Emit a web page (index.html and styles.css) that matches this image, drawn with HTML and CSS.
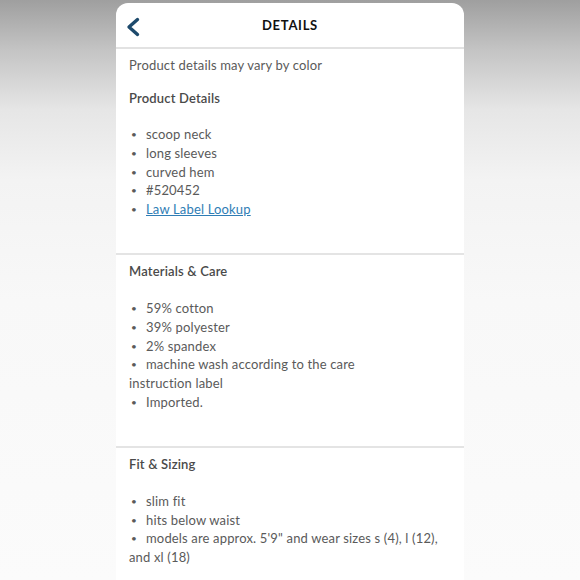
FILE: index.html
```html
<!DOCTYPE html>
<html>
<head>
<meta charset="utf-8">
<link rel="stylesheet" href="styles.css">
</head>
<body>
<div class="stage">
  <div class="card">
    <header class="topbar">
      <div class="back">
        <svg width="16" height="20" viewBox="0 0 16 20"><path d="M12.5 2.5 L4 10 L12.5 17.5" fill="none" stroke="#1d4a6c" stroke-width="3.4" stroke-linecap="round" stroke-linejoin="round"/></svg>
      </div>
      <h1 class="title">DETAILS</h1>
      <div></div>
    </header>
    <section class="sec">
      <p class="note">Product details may vary by color</p>
      <h2 class="head head-first">Product Details</h2>
      <ul class="list list-first">
        <li><span class="dot">•</span>scoop neck</li>
        <li><span class="dot">•</span>long sleeves</li>
        <li><span class="dot">•</span>curved hem</li>
        <li><span class="dot">•</span>#520452</li>
        <li><span class="dot">•</span><a class="link" href="#">Law Label Lookup</a></li>
      </ul>
    </section>
    <section class="sec sec-div">
      <h2 class="head">Materials &amp; Care</h2>
      <ul class="list">
        <li><span class="dot">•</span>59% cotton</li>
        <li><span class="dot">•</span>39% polyester</li>
        <li><span class="dot">•</span>2% spandex</li>
        <li><span class="dot">•</span>machine wash according to the care<br>instruction label</li>
        <li><span class="dot">•</span>Imported.</li>
      </ul>
    </section>
    <section class="sec sec-div">
      <h2 class="head">Fit &amp; Sizing</h2>
      <ul class="list">
        <li><span class="dot">•</span>slim fit</li>
        <li><span class="dot">•</span>hits below waist</li>
        <li><span class="dot">•</span>models are approx. 5'9" and wear sizes s (4), l (12),<br>and xl (18)</li>
      </ul>
    </section>
  </div>
</div>
</body>
</html>
```
FILE: styles.css
```css
html, body {
  margin: 0;
  padding: 0;
}
body {
  width: 580px;
  height: 580px;
  overflow: hidden;
  background: linear-gradient(to bottom, #9f9f9f 0px, #c4c4c4 50px, #e6e6e6 110px, #f3f3f3 180px, #f8f8f8 300px, #fbfbfb 580px);
  font-family: Lato, "Liberation Sans", sans-serif;
}
.stage {
  display: flex;
  justify-content: center;
  padding-top: 3px;
}
.card {
  width: 348px;
  height: 577px;
  background: #ffffff;
  border-radius: 12px 12px 0 0;
  overflow: hidden;
}
.topbar {
  height: 44px;
  display: grid;
  grid-template-columns: 1fr auto 1fr;
  align-items: center;
  border-bottom: 2px solid #e2e2e2;
}
.back {
  padding-left: 9px;
  padding-top: 3px;
  display: flex;
  align-items: center;
}
.title {
  margin: 0;
  font-size: 13px;
  font-weight: 700;
  letter-spacing: 0.7px;
  color: #111111;
}
.sec {
  padding: 7px 13px 34.5px 13px;
  font-size: 13px;
  line-height: 18.75px;
  letter-spacing: 0.16px;
  color: #5a5a5a;
}
.sec-div {
  border-top: 2px solid #e4e4e4;
}
.note {
  margin: 0;
}
.head {
  margin: 0;
  font-size: 13px;
  font-weight: 600;
  color: #4a4a4a;
  line-height: 18.75px;
}
.head-first {
  margin-top: 14px;
}
.list {
  list-style: none;
  margin: 18px 0 0 0;
  padding: 0;
}
.list-first {
  margin-top: 17.5px;
}
.dot {
  display: inline-block;
  width: 15px;
  padding-left: 2px;
  font-size: 10px;
  vertical-align: top;
}
.link {
  color: #2f7db5;
  text-decoration: underline;
}
```
